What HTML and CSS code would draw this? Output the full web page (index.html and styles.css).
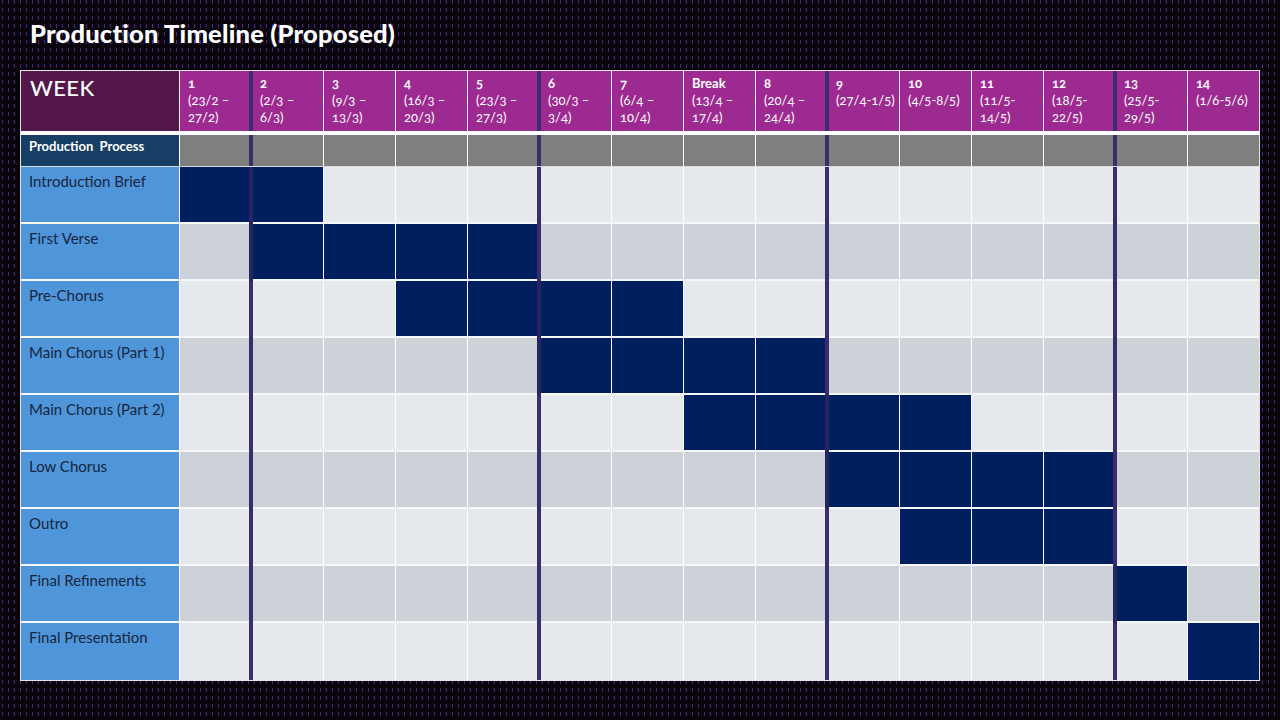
FILE: index.html
```html
<!DOCTYPE html>
<html lang="en">
<head>
<meta charset="utf-8">
<title>Production Timeline (Proposed)</title>
<link rel="stylesheet" href="styles.css">
</head>
<body>
<h1 class="title">Production Timeline (Proposed)</h1>
<div class="sheet">
  <div class="row hdr">
    <div class="lbl week">WEEK</div>
    <div class="h"><b>1</b><br>(23/2 –<br>27/2)</div>
    <div class="h e"><b>2</b><br>(2/3 –<br>6/3)</div>
    <div class="h"><b>3</b><br>(9/3 –<br>13/3)</div>
    <div class="h"><b>4</b><br>(16/3 –<br>20/3)</div>
    <div class="h"><b>5</b><br>(23/3 –<br>27/3)</div>
    <div class="h e"><b>6</b><br>(30/3 –<br>3/4)</div>
    <div class="h"><b>7</b><br>(6/4 –<br>10/4)</div>
    <div class="h"><b>Break</b><br>(13/4 –<br>17/4)</div>
    <div class="h"><b>8</b><br>(20/4 –<br>24/4)</div>
    <div class="h e"><b>9</b><br>(27/4-1/5)</div>
    <div class="h"><b>10</b><br>(4/5-8/5)</div>
    <div class="h"><b>11</b><br>(11/5-<br>14/5)</div>
    <div class="h"><b>12</b><br>(18/5-<br>22/5)</div>
    <div class="h e"><b>13</b><br>(25/5-<br>29/5)</div>
    <div class="h"><b>14</b><br>(1/6-5/6)</div>
  </div>
  <div class="row proc">
    <div class="lbl">Production&nbsp; Process</div>
    <div class="c"></div><div class="c e"></div><div class="c"></div><div class="c"></div><div class="c"></div>
    <div class="c e"></div><div class="c"></div><div class="c"></div><div class="c"></div><div class="c e"></div>
    <div class="c"></div><div class="c"></div><div class="c"></div><div class="c e"></div><div class="c"></div>
  </div>
  <div class="row task light">
    <div class="lbl">Introduction Brief</div>
    <div class="c on"></div><div class="c e on"></div><div class="c"></div><div class="c"></div><div class="c"></div>
    <div class="c e"></div><div class="c"></div><div class="c"></div><div class="c"></div><div class="c e"></div>
    <div class="c"></div><div class="c"></div><div class="c"></div><div class="c e"></div><div class="c"></div>
  </div>
  <div class="row task dark">
    <div class="lbl">First Verse</div>
    <div class="c"></div><div class="c e on"></div><div class="c on"></div><div class="c on"></div><div class="c on"></div>
    <div class="c e"></div><div class="c"></div><div class="c"></div><div class="c"></div><div class="c e"></div>
    <div class="c"></div><div class="c"></div><div class="c"></div><div class="c e"></div><div class="c"></div>
  </div>
  <div class="row task light">
    <div class="lbl">Pre-Chorus</div>
    <div class="c"></div><div class="c e"></div><div class="c"></div><div class="c on"></div><div class="c on"></div>
    <div class="c e on"></div><div class="c on"></div><div class="c"></div><div class="c"></div><div class="c e"></div>
    <div class="c"></div><div class="c"></div><div class="c"></div><div class="c e"></div><div class="c"></div>
  </div>
  <div class="row task dark">
    <div class="lbl">Main Chorus (Part 1)</div>
    <div class="c"></div><div class="c e"></div><div class="c"></div><div class="c"></div><div class="c"></div>
    <div class="c e on"></div><div class="c on"></div><div class="c on"></div><div class="c on"></div><div class="c e"></div>
    <div class="c"></div><div class="c"></div><div class="c"></div><div class="c e"></div><div class="c"></div>
  </div>
  <div class="row task light">
    <div class="lbl">Main Chorus (Part 2)</div>
    <div class="c"></div><div class="c e"></div><div class="c"></div><div class="c"></div><div class="c"></div>
    <div class="c e"></div><div class="c"></div><div class="c on"></div><div class="c on"></div><div class="c e on"></div>
    <div class="c on"></div><div class="c"></div><div class="c"></div><div class="c e"></div><div class="c"></div>
  </div>
  <div class="row task dark">
    <div class="lbl">Low Chorus</div>
    <div class="c"></div><div class="c e"></div><div class="c"></div><div class="c"></div><div class="c"></div>
    <div class="c e"></div><div class="c"></div><div class="c"></div><div class="c"></div><div class="c e on"></div>
    <div class="c on"></div><div class="c on"></div><div class="c on"></div><div class="c e"></div><div class="c"></div>
  </div>
  <div class="row task light">
    <div class="lbl">Outro</div>
    <div class="c"></div><div class="c e"></div><div class="c"></div><div class="c"></div><div class="c"></div>
    <div class="c e"></div><div class="c"></div><div class="c"></div><div class="c"></div><div class="c e"></div>
    <div class="c on"></div><div class="c on"></div><div class="c on"></div><div class="c e"></div><div class="c"></div>
  </div>
  <div class="row task dark">
    <div class="lbl">Final Refinements</div>
    <div class="c"></div><div class="c e"></div><div class="c"></div><div class="c"></div><div class="c"></div>
    <div class="c e"></div><div class="c"></div><div class="c"></div><div class="c"></div><div class="c e"></div>
    <div class="c"></div><div class="c"></div><div class="c"></div><div class="c e on"></div><div class="c"></div>
  </div>
  <div class="row task light last">
    <div class="lbl">Final Presentation</div>
    <div class="c"></div><div class="c e"></div><div class="c"></div><div class="c"></div><div class="c"></div>
    <div class="c e"></div><div class="c"></div><div class="c"></div><div class="c"></div><div class="c e"></div>
    <div class="c"></div><div class="c"></div><div class="c"></div><div class="c e"></div><div class="c on"></div>
  </div>
</div>
</body>
</html>
```

FILE: styles.css
```css
html, body {
  margin: 0;
  padding: 0;
}
body {
  width: 1280px;
  height: 720px;
  overflow: hidden;
  background-color: #07050b;
  background-image:
    linear-gradient(to bottom, transparent 0, transparent 4px, #07050b 4px, #07050b 8px),
    linear-gradient(to right, transparent 0, transparent 2px, #4e2289 2px, #4e2289 3px, transparent 3px);
  background-size: 6px 8px, 6px 8px;
  font-family: Lato, "Open Sans", sans-serif;
}
.title {
  margin: 0;
  height: 70px;
  box-sizing: border-box;
  padding: 18px 0 0 30px;
  font-family: Lato, sans-serif;
  font-weight: 900;
  font-size: 25.5px;
  line-height: 30px;
  color: #ffffff;
  letter-spacing: 0.2px;
}
.sheet {
  margin-left: 20px;
  width: 1240px;
  box-sizing: border-box;
  border: 1px solid #e4e4e4;
  background: #e7eaed;
}
.row {
  display: grid;
  grid-template-columns: 159px repeat(14, 72px) 71px;
  box-sizing: border-box;
}
.row > div {
  position: relative;
  box-sizing: border-box;
  border-right: 1px solid #ffffff;
}
.row > div:last-child {
  border-right: none;
}
.lbl {
  padding: 0 0 0 8px;
}

/* header */
.hdr {
  height: 64px;
  border-bottom: 4px solid #ffffff;
}
.week {
  background: #531849;
  color: #ffffff;
  font-size: 22px;
  line-height: 26px;
  font-weight: 500;
  padding: 4px 0 0 9px;
  letter-spacing: 0.4px;
}
.h {
  background: #9d2a90;
  color: #ffffff;
  font-size: 13px;
  line-height: 17px;
  padding: 4px 0 0 8px;
  font-variant-numeric: oldstyle-nums;
}
.h b {
  font-weight: 700;
}

/* production process row */
.proc {
  height: 32px;
  border-bottom: 1px solid #dcdcdc;
}
.proc .lbl {
  background: #173e64;
  color: #ffffff;
  font-size: 13px;
  font-weight: 700;
  line-height: 22px;
  padding-left: 8px;
}
.proc .c {
  background: #7f7f7f;
}

/* task rows */
.task {
  height: 57px;
  border-bottom: 2px solid rgba(255, 255, 255, 0.6);
}
.task.last {
  border-bottom: none;
}
.task .lbl {
  background: #4f95d9;
  color: #17263f;
  font-size: 15px;
  line-height: 18px;
  padding: 5px 0 0 8px;
}
.light .c {
  background: #e6e9ec;
}
.dark .c {
  background: #cdd1d8;
}
.task .c.on {
  background: #001f5e;
}

/* heavy phase dividers */
.e::before {
  content: "";
  position: absolute;
  left: -3px;
  top: 0;
  bottom: 0;
  width: 4px;
  background: #3b2c6e;
  z-index: 1;
}
.task .e::before {
  bottom: -2px;
}
.task.last .e::before {
  bottom: 0;
}
.e.on::before {
  background: #2a2362;
}
```
